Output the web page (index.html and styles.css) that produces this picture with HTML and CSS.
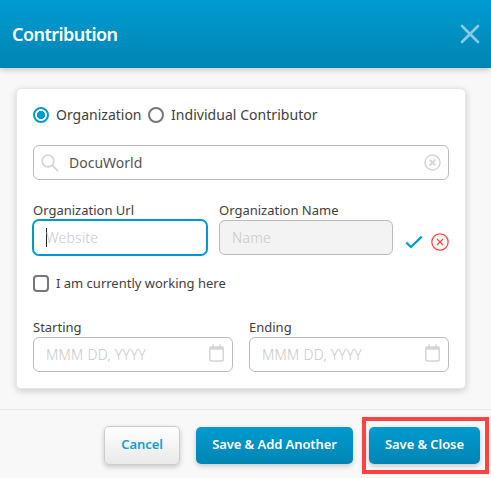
FILE: index.html
```html
<!DOCTYPE html>
<html lang="en">
<head>
<meta charset="utf-8">
<title>Contribution</title>
<link rel="stylesheet" href="styles.css">
</head>
<body>
<div class="dialog">
  <header class="header">
    <h1 class="title">Contribution</h1>
    <svg class="close" width="20" height="20" viewBox="0 0 20 20"><path d="M2 2L18 18M18 2L2 18"/></svg>
  </header>
  <main class="body">
    <section class="card">
      <div class="radios">
        <span class="radio radio-on"></span><span class="radio-label">Organization</span>
        <span class="radio"></span><span class="radio-label wide">Individual Contributor</span>
      </div>
      <div class="field search">
        <svg class="search-icon" width="18" height="18" viewBox="0 0 18 18"><circle cx="7" cy="7" r="5.9"/><path d="M11.4 11.4L16.6 16.6"/></svg>
        <span class="value">DocuWorld</span>
        <svg class="clear-icon" width="17" height="17" viewBox="0 0 17 17"><circle cx="8.5" cy="8.5" r="7.5"/><path class="thick" d="M5.6 5.6L11.4 11.4M11.4 5.6L5.6 11.4"/></svg>
      </div>
      <div class="row org">
        <div class="group">
          <label class="label">Organization Url</label>
          <div class="field focused"><span class="caret"></span><span class="hint">Website</span></div>
        </div>
        <div class="group">
          <label class="label">Organization Name</label>
          <div class="field disabled"><span class="hint">Name</span></div>
        </div>
        <div class="actions">
          <svg class="check-icon" width="18" height="18" viewBox="0 0 18 18"><path d="M1.3 9.6L6 14L16.7 3.6"/></svg>
          <svg class="reject-icon" width="18" height="18" viewBox="0 0 18 18"><circle cx="9" cy="9" r="8.2"/><path d="M6 6L12 12M12 6L6 12"/></svg>
        </div>
      </div>
      <div class="check"><span class="checkbox"></span><span class="label">I am currently working here</span></div>
      <div class="row dates">
        <div class="group">
          <label class="label">Starting</label>
          <div class="field date"><span class="hint">MMM DD, YYYY</span>
            <svg class="calendar" width="15" height="18" viewBox="0 0 15 18"><rect x=".8" y="3" width="13.4" height="14" rx="1.2"/><path class="bar" d="M.8 4.2H14.2"/><path d="M4.2 .2V4M10.8 .2V4"/></svg></div>
        </div>
        <div class="group">
          <label class="label">Ending</label>
          <div class="field date"><span class="hint">MMM DD, YYYY</span>
            <svg class="calendar" width="15" height="18" viewBox="0 0 15 18"><rect x=".8" y="3" width="13.4" height="14" rx="1.2"/><path class="bar" d="M.8 4.2H14.2"/><path d="M4.2 .2V4M10.8 .2V4"/></svg></div>
        </div>
      </div>
    </section>
  </main>
  <footer class="footer">
    <button class="btn cancel">Cancel</button>
    <button class="btn primary another">Save &amp; Add Another</button>
    <span class="highlight"><button class="btn primary save">Save &amp; Close</button></span>
  </footer>
</div>
</body>
</html>
```
FILE: styles.css
```css
* { box-sizing: border-box; }
body { margin: 0; font-family: "Noto Sans", "Open Sans", sans-serif; color: #404040; overflow: hidden; }
.dialog { width: 491px; height: 478px; display: flex; flex-direction: column; background: #f8f8f8; }
.header { height: 68px; flex: none; display: flex; align-items: center; justify-content: space-between; padding: 0 11px 0 12px; background: linear-gradient(#009bd0, #0085b3); box-shadow: 0 1px 7px rgba(0,0,0,.25); }
.title { margin: 0; font-size: 18px; line-height: 24px; font-weight: 600; letter-spacing: -.55px; color: #fff; }
.close { fill: none; stroke: #8acae2; stroke-width: 2.6; stroke-linecap: round; }
.body { height: 341px; flex: none; padding: 20px 24px 20px 16px; }
.card { width: 450px; height: 301px; padding: 16px; background: #fff; border: 1px solid #e6e6e9; border-radius: 5px; box-shadow: 0 2px 7px rgba(0,0,0,.18); }
.radios { height: 20px; display: flex; align-items: center; }
.radio { width: 16px; height: 16px; flex: none; border: 2px solid #777; border-radius: 50%; background: #fff; }
.radio-on { border-color: #0099cd; background: radial-gradient(circle, #0099cd 3.8px, #fff 4.4px); }
.radio-label { margin: 0 6.5px 0 7px; font-size: 14px; line-height: 20px; white-space: nowrap; }
.wide { letter-spacing: .04px; }
.field { height: 35px; display: flex; align-items: center; border: 1px solid #bbb; border-radius: 6px; background: #fff; padding: 0 12px; font-size: 14px; line-height: 20px; white-space: nowrap; }
.search { margin-top: 20px; padding: 0 7px 0 7px; }
.search-icon { fill: none; stroke: #d5d5d5; stroke-width: 1.7; stroke-linecap: round; }
.value { color: #555; margin-left: 10px; flex: 1; }
.clear-icon { fill: none; stroke: #d5d5d5; stroke-width: 1.5; }
.thick { stroke-width: 2; }
.row { display: flex; }
.label { display: block; font-size: 13px; line-height: 18px; white-space: nowrap; }
.org { margin-top: 21px; gap: 12px; }
.org .label { margin-bottom: 1px; }
.org .group { width: 174px; }
.dates { margin-top: 26px; gap: 16px; }
.dates .group { width: 200px; }
.dates .label { margin-bottom: 1px; }
.hint { color: #c8c8c8; font-weight: 300; letter-spacing: .22px; }
.focused { border-color: #0099cd; box-shadow: 0 0 0 1px #0099cd; }
.caret { width: 1px; height: 19px; background: #222; margin-right: -1px; }
.disabled { background: #f3f3f3; }
.actions { display: flex; gap: 8px; height: 54px; padding-top: 32px; }
.check-icon { fill: none; stroke: #0099cd; stroke-width: 2.2; }
.reject-icon { fill: none; stroke: #f9443d; stroke-width: 1.2; }
.check { display: flex; align-items: center; gap: 7px; height: 18px; margin-top: 19px; }
.checkbox { width: 16px; height: 17px; border: 2px solid #777; border-radius: 4px; }
.date { justify-content: space-between; padding-right: 8px; }
.date .hint { letter-spacing: .3px; }
.calendar { fill: none; stroke: #d5d5d5; stroke-width: 1.5; margin-top: -4px; }
.bar { stroke-width: 3; }
.footer { flex: 1; display: flex; align-items: flex-start; border-top: 1px solid #e5e5e5; padding: 7px 0 0 104px; }
.btn { font-family: inherit; font-size: 13px; line-height: 18px; font-weight: 600; letter-spacing: -.08px; border: 0; border-radius: 5px; height: 37px; padding: 0 0 3px; margin-top: 10px; white-space: nowrap; flex: none; box-shadow: 0 2px 5px rgba(0,0,0,.2); }
.cancel { width: 76px; height: 39px; margin-top: 9px; color: #119fd0; border: 1px solid #ccc; background: linear-gradient(#fff, #e9e9e9); }
.primary { color: #fff; background: linear-gradient(#009bd0, #0085b3); }
.another { width: 157px; margin-left: 16px; }
.highlight { flex: none; width: 127px; height: 57px; margin-left: 9px; border: 4px solid #fc4243; padding: 6px 0 0 3px; display: flex; }
.save { width: 111px; margin: 0; }
```
